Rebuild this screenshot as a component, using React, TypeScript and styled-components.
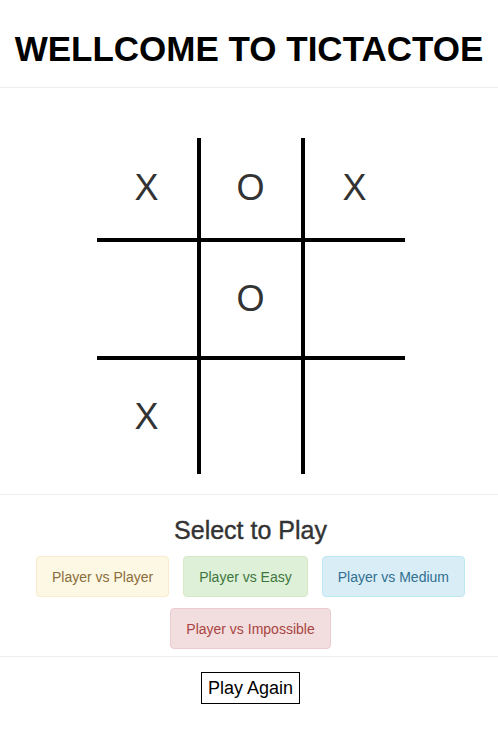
import React from "react";
import styled, { createGlobalStyle } from "styled-components";

const GlobalStyle = createGlobalStyle`
  html, body {
    margin: 0;
    padding: 0;
    background: #ffffff;
  }
  body {
    font-family: "Liberation Sans", Arial, Helvetica, sans-serif;
    color: #333333;
  }
`;

const Page = styled.div`
  width: 498px;
  display: flex;
  flex-direction: column;
  align-items: stretch;
`;

const Header = styled.header`
  padding-top: 29px;
  display: flex;
  justify-content: center;
`;

const Title = styled.h1`
  margin: 0;
  font-family: "Liberation Sans", Arial, sans-serif;
  font-weight: 700;
  font-size: 35px;
  line-height: 40px;
  color: #000000;
  white-space: nowrap;
`;

const Divider = styled.hr<{ $top: number }>`
  margin: ${(p) => p.$top}px 0 0 0;
  border: 0;
  border-top: 1px solid #eeeeee;
  height: 0;
`;

const BoardSection = styled.section`
  padding: 50px 0 20px 3px;
  display: flex;
  justify-content: center;
`;

const Board = styled.div`
  display: grid;
  grid-template-columns: 104px 104px 100px;
  grid-template-rows: 104px 118px 114px;
`;

const Cell = styled.div<{ $right: boolean; $bottom: boolean }>`
  display: flex;
  align-items: center;
  justify-content: center;
  box-sizing: border-box;
  border-right: ${(p) => (p.$right ? "4px solid #000" : "none")};
  border-bottom: ${(p) => (p.$bottom ? "4px solid #000" : "none")};
  font-family: "Liberation Sans", Arial, sans-serif;
  font-size: 36px;
  color: #333333;
  line-height: 1;
`;

const Controls = styled.section`
  padding: 21px 0 7px 3px;
  display: flex;
  flex-direction: column;
  align-items: center;
`;

const SubTitle = styled.h3`
  margin: 0;
  font-family: "Liberation Sans", Arial, sans-serif;
  font-weight: 500;
  font-size: 25px;
  line-height: 28px;
  color: #333333;
  -webkit-text-stroke: 0.4px #333333;
`;

const ModeList = styled.div`
  margin-top: 12px;
  display: flex;
  flex-wrap: wrap;
  justify-content: center;
  column-gap: 14px;
  row-gap: 11px;
  width: 440px;
`;

const variants = {
  warning: { bg: "#fcf8e3", border: "#faebcc", color: "#8a6d3b" },
  success: { bg: "#dff0d8", border: "#d6e9c6", color: "#3c763d" },
  info: { bg: "#d9edf7", border: "#bce8f1", color: "#31708f" },
  danger: { bg: "#f2dede", border: "#ebccd1", color: "#a94442" },
};

type Variant = keyof typeof variants;

const ModeButton = styled.button<{ $variant: Variant }>`
  box-sizing: border-box;
  height: 41px;
  padding: 0 15px;
  border-radius: 4px;
  border: 1px solid ${(p) => variants[p.$variant].border};
  background: ${(p) => variants[p.$variant].bg};
  color: ${(p) => variants[p.$variant].color};
  font-family: "Liberation Sans", Arial, sans-serif;
  font-size: 14px;
  line-height: 20px;
  cursor: pointer;
`;

const Footer = styled.section`
  padding: 15px 0 0 3px;
  display: flex;
  justify-content: center;
`;

const PlayAgain = styled.button`
  box-sizing: border-box;
  height: 32px;
  padding: 0 6px;
  border: 1px solid #000000;
  background: #ffffff;
  color: #000000;
  font-family: "Liberation Sans", Arial, sans-serif;
  font-size: 18px;
  line-height: 22px;
  cursor: pointer;
`;

const board = ["X", "O", "X", "", "O", "", "X", "", ""];

const modes: { label: string; variant: Variant }[] = [
  { label: "Player vs Player", variant: "warning" },
  { label: "Player vs Easy", variant: "success" },
  { label: "Player vs Medium", variant: "info" },
  { label: "Player vs Impossible", variant: "danger" },
];

export default function App() {
  return (
    <Page>
      <GlobalStyle />
      <Header>
        <Title>WELLCOME TO TICTACTOE</Title>
      </Header>
      <Divider $top={18} />
      <BoardSection>
        <Board>
          {board.map((v, i) => (
            <Cell key={i} $right={i % 3 < 2} $bottom={i < 6}>
              {v}
            </Cell>
          ))}
        </Board>
      </BoardSection>
      <Divider $top={0} />
      <Controls>
        <SubTitle>Select to Play</SubTitle>
        <ModeList>
          {modes.map((m) => (
            <ModeButton key={m.label} $variant={m.variant}>
              {m.label}
            </ModeButton>
          ))}
        </ModeList>
      </Controls>
      <Divider $top={0} />
      <Footer>
        <PlayAgain>Play Again</PlayAgain>
      </Footer>
    </Page>
  );
}
